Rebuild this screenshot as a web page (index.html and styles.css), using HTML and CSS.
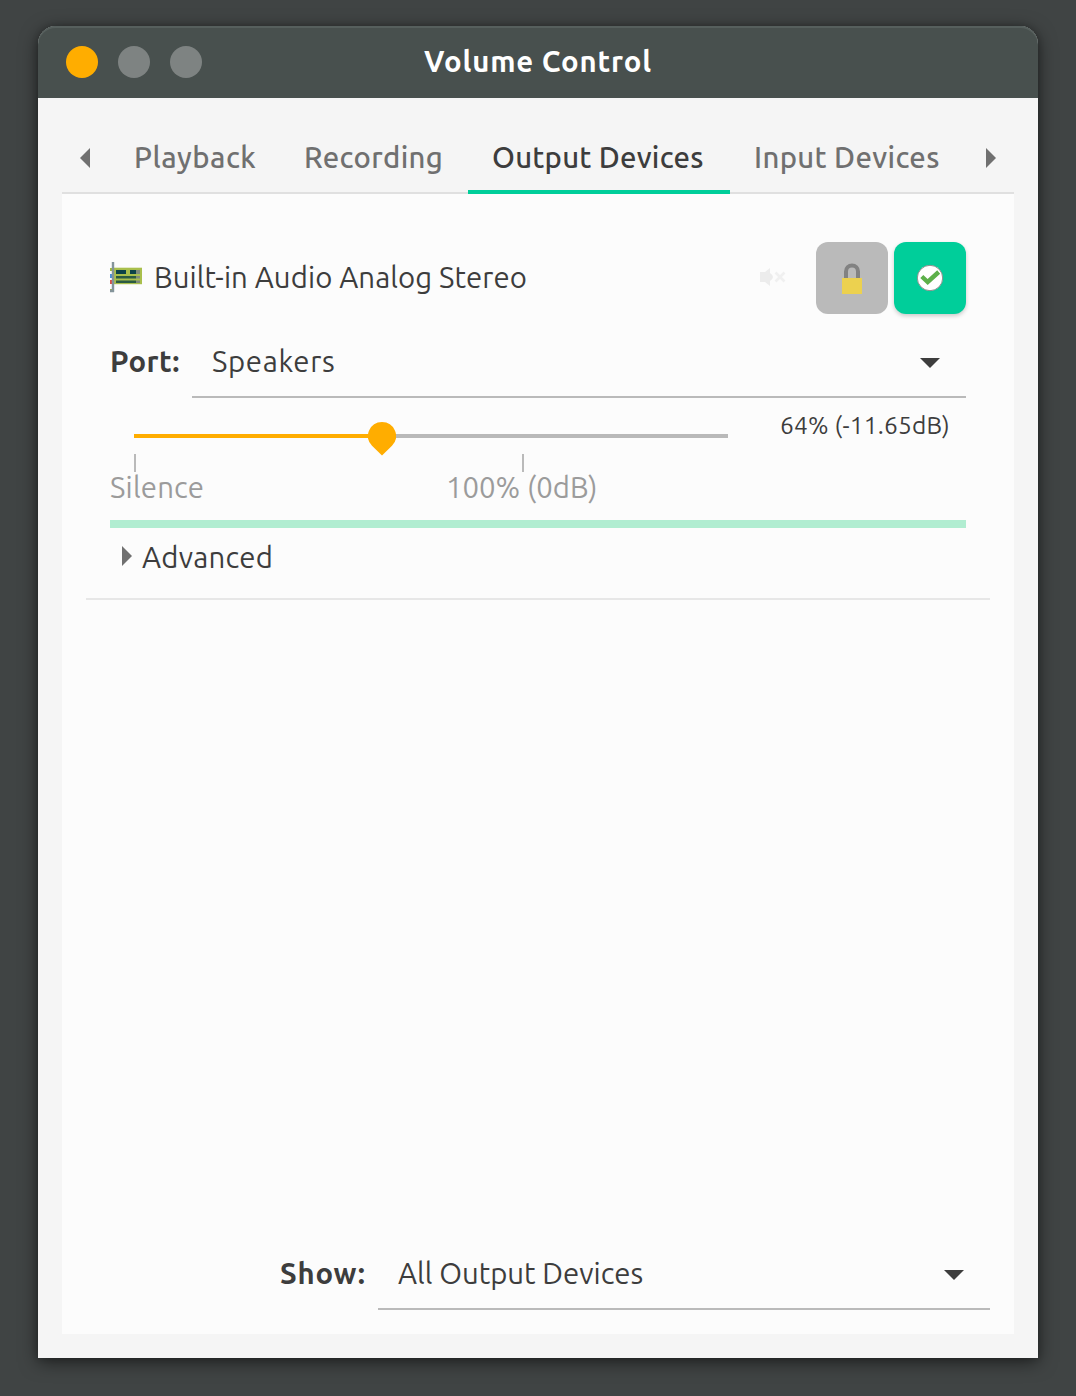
FILE: index.html
```html
<!DOCTYPE html>
<html lang="en">
<head>
<meta charset="utf-8">
<title>Volume Control</title>
<link rel="stylesheet" href="styles.css">
</head>
<body>
<main class="window">
  <header class="titlebar">
    <div class="window-buttons"><i class="dot dot-close"></i><i class="dot"></i><i class="dot"></i></div>
    <h1 class="title">Volume Control</h1>
  </header>
  <div class="content">
    <nav class="tabs">
      <svg class="scroll-arrow" width="48" height="20" viewBox="0 0 48 20"><path d="M28 0v20L18 10z"/></svg>
      <a class="tab tab-playback">Playback</a>
      <a class="tab tab-recording">Recording</a>
      <a class="tab tab-output active">Output Devices</a>
      <a class="tab tab-input">Input Devices</a>
      <svg class="scroll-arrow" width="50" height="20" viewBox="0 0 50 20"><path d="M22 0v20l10-10z"/></svg>
    </nav>
    <section class="page">
      <article class="device">
        <div class="device-head">
          <svg class="card-icon" width="32" height="32" viewBox="0 0 32 32">
            <path d="M0 6h3v3H0zM0 27h3v3H0z" fill="#9eb83f"/>
            <rect x="0" y="12" width="3" height="4" fill="#4a90d9"/>
            <rect x="0" y="18" width="3" height="4" fill="#d9534a"/>
            <rect x="4" y="5.700" width="28" height="16.500" fill="#a9bf4c"/>
            <path d="M6 8h10v4H6zm14 0h6v4h-6z" fill="#0c4348"/>
            <path d="M6 14h20v2.600H6zm0 4.600h20v2.400H6z" fill="#2b5b43"/>
            <path d="M26 8h4v4h-4zm0 6h4v2.600h-4zm0 4.600h4V21h-4z" fill="#7f8b7c"/>
            <path d="M3 0v30M0 29h4" fill="none" stroke="#84949a" stroke-width="2.400"/>
          </svg>
          <span class="device-name">Built-in Audio Analog Stereo</span>
          <svg class="mute-icon" width="28" height="18" viewBox="0 0 28 18"><path d="M0 4h5l5-4v5q3 2 3 4t-3 4v5l-5-4H0z" fill="#ececec"/><path d="M15.500 4.500l9 9m0-9l-9 9" stroke="#f0f0f0" stroke-width="2.600"/></svg>
          <button class="toggle lock"><svg width="32" height="32" viewBox="0 0 32 32"><path d="M10 17V9.500a6 6 0 0 1 12 0V17" fill="none" stroke="#828282" stroke-width="4"/><path d="M6 16h20v16H6z" fill="#ecd14f"/></svg></button>
          <button class="toggle fallback"><svg width="28" height="28" viewBox="0 0 28 28"><circle cx="14" cy="14" r="12.700" fill="#fff" stroke="#8a8f8c"/><path d="M5.800 12.500l5.900 5.500L22.700 8" fill="none" stroke="#5db04a" stroke-width="4.400"/></svg></button>
        </div>
        <div class="port-row">
          <b class="label port-label">Port:</b>
          <div class="select"><span class="port-value">Speakers</span><svg width="20" height="10" viewBox="0 0 20 10"><path d="M0 0h20L10 10z"/></svg></div>
        </div>
        <div class="volume-row">
          <div class="slider">
            <div class="track"><div class="fill" style="width:248px"></div></div>
            <svg class="thumb" width="28" height="34" viewBox="0 0 28 34"><path d="M14 0a14 14 0 0 1 10 23.800L14 33.500 4 23.800A14 14 0 0 1 14 0z"/></svg>
            <div class="marks">
              <div class="mark mark-silence"><i></i><span>Silence</span></div>
              <div class="mark mark-full"><i></i><span>100% (0dB)</span></div>
            </div>
          </div>
          <div class="volume-value">64% (-11.65dB)</div>
        </div>
        <div class="meter"></div>
        <div class="advanced"><svg width="10" height="20" viewBox="0 0 10 20"><path d="M0 0v20l10-10z"/></svg><span>Advanced</span></div>
      </article>
      <footer class="show-row">
        <b class="label show-label">Show:</b>
        <div class="select"><span>All Output Devices</span><svg width="20" height="10" viewBox="0 0 20 10"><path d="M0 0h20L10 10z"/></svg></div>
      </footer>
    </section>
  </div>
</main>
</body>
</html>
```
FILE: styles.css
```css
* { box-sizing: border-box; }
body {
  margin: 0;
  height: 1396px;
  padding: 26px 38px 38px;
  overflow: hidden;
  background: #404444;
  font: 29.33px/36px Ubuntu, "Noto Sans", sans-serif;
  white-space: nowrap;
  color: #3d3d3d;
}
.window {
  height: 1332px;
  display: flex;
  flex-direction: column;
  border-radius: 18px 18px 0 0;
  background: #f5f5f5;
  box-shadow: 0 4px 18px rgba(0, 0, 0, .55), 0 0 6px rgba(0, 0, 0, .2);
}
.titlebar {
  height: 72px;
  display: grid;
  grid-template-columns: 1fr auto 1fr;
  align-items: center;
  padding: 0 28px;
  border-radius: 18px 18px 0 0;
  background: #48504e;
  box-shadow: inset 0 2px #565f5d;
}
.window-buttons { display: flex; gap: 20px; }
.dot { width: 32px; height: 32px; border-radius: 50%; background: #7e8382; }
.dot-close { background: #ffad00; }
.title {
  margin: 0;
  font-size: 29.33px;
  font-weight: 700;
  letter-spacing: .84px;
  color: #fff;
}
.content { flex: 1; padding: 24px; display: flex; flex-direction: column; }
.tabs {
  height: 72px;
  display: flex;
  align-items: center;
  box-shadow: inset 0 -2px #e0e0e0;
  color: #707070;
  font-weight: 500;
  letter-spacing: .33px;
}
.scroll-arrow { fill: #707070; }
.tab { height: 72px; padding: 18px 24px 0; }
.tab-playback { width: 170px; letter-spacing: .45px; }
.tab-recording { width: 188px; }
.tab-output { width: 262px; letter-spacing: .25px; }
.tab-input { width: 234px; }
.active { color: #3d3d3d; border-bottom: 4px solid #00ce9a; }
.page {
  flex: 1;
  display: flex;
  flex-direction: column;
  justify-content: space-between;
  padding: 24px;
  background: #fcfcfc;
}
.device { height: 382px; padding: 24px 24px 0; border-bottom: 2px solid #e7e7e7; }
.device-head { height: 72px; display: flex; align-items: center; }
.card-icon { margin-right: 12px; }
.device-name { flex: 1; letter-spacing: .08px; }
.mute-icon { margin: 0 28px 2px 0; }
.toggle {
  width: 72px;
  height: 72px;
  padding: 0;
  display: flex;
  align-items: center;
  justify-content: center;
  border: 0;
  border-radius: 12px;
}
.lock { background: #bababa; margin-right: 6px; }
.fallback { background: #00ce9a; box-shadow: 0 2px 4px rgba(0, 0, 0, .2); }
.port-row { height: 84px; display: flex; padding-top: 12px; }
.label { padding-top: 18px; }
.port-label { width: 82px; letter-spacing: .4px; }
.port-value { letter-spacing: .65px; }
.select {
  flex: 1;
  height: 72px;
  display: flex;
  align-items: flex-start;
  justify-content: space-between;
  padding: 18px 26px 0 20px;
  border-bottom: 2px solid #bababa;
}
.select svg { margin-top: 14px; fill: #3d3d3d; }
.volume-row { height: 122px; display: flex; justify-content: space-between; }
.slider { width: 642px; position: relative; padding-top: 36px; }
.track { height: 4px; margin: 0 24px; background: #b9b9b9; }
.fill { height: 4px; background: #ffad00; }
.thumb { position: absolute; left: 258px; top: 24px; fill: #ffad00; }
.marks { padding-top: 16px; display: flex; color: #9b9b9b; }
.mark i { display: block; width: 2px; height: 18px; background: #bababa; }
.mark span { display: block; margin-top: -2px; }
.mark-silence { width: 336px; letter-spacing: .2px; }
.mark-silence i { margin-left: 24px; }
.mark-full i { margin-left: 76px; }
.volume-value { width: 186px; padding-top: 9px; font-size: 24.44px; letter-spacing: .22px; }
.meter { height: 8px; background: #b1edd1; }
.advanced { display: flex; gap: 10px; padding: 12px 0 0 12px; letter-spacing: .25px; }
.advanced svg { margin-top: 6px; fill: #707070; }
.show-row { height: 72px; display: flex; padding-left: 194px; }
.show-label { width: 98px; letter-spacing: .8px; }
```
